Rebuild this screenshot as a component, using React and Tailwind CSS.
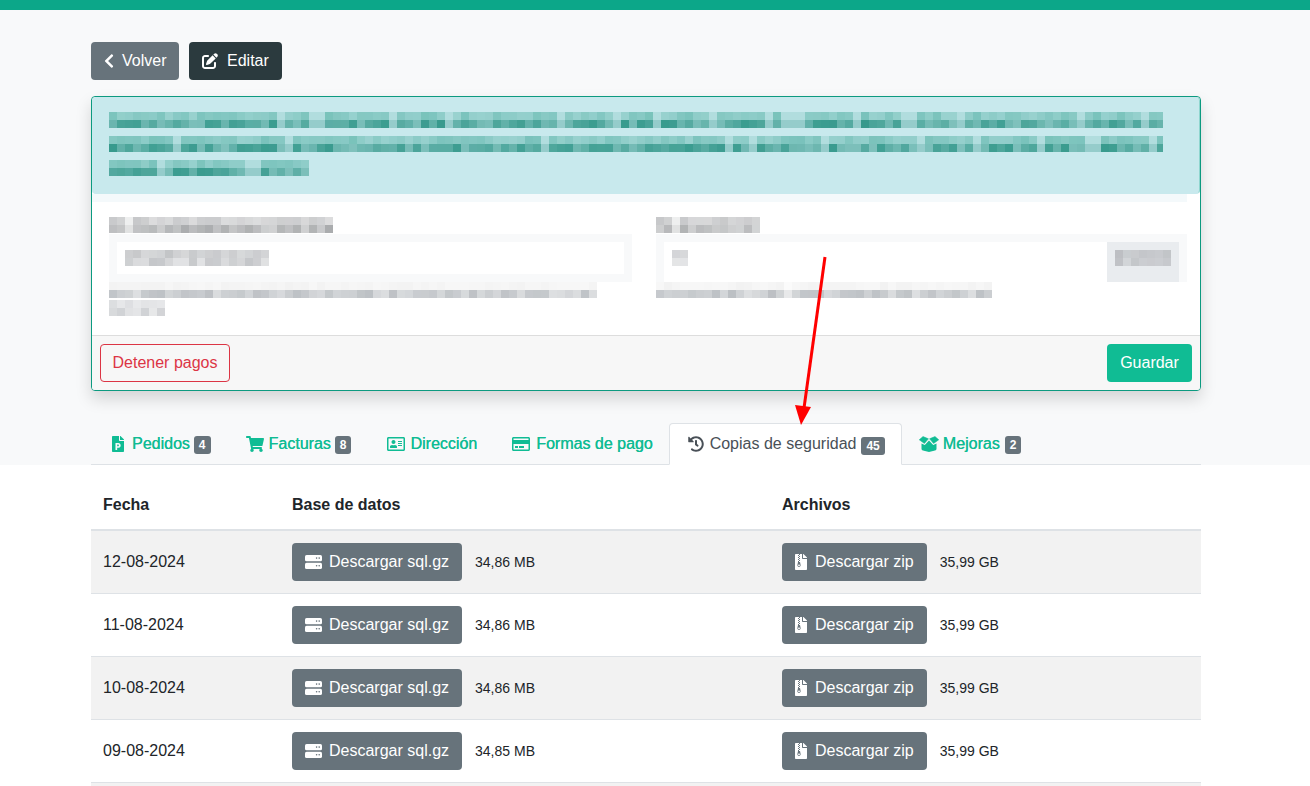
import React from 'react';
import {
  FaChevronLeft, FaFilePowerpoint, FaShoppingCart, FaRegAddressCard,
  FaRegCreditCard, FaHistory, FaFileArchive,
} from 'react-icons/fa';
import { FaPenToSquare } from 'react-icons/fa6';

// pixelated (censored) text from the original screenshot
const Mosaic = ({ width, seed, top, bottom, gaps = 0.1, height = 16 }) => {
  let s = seed;
  const rnd = () => {
    s = (s * 9301 + 49297) % 233280;
    return s / 233280;
  };
  const cells = [];
  const cols = Math.round(width / 8);
  for (let i = 0; i < cols; i++) {
    const gap = rnd() < gaps;
    const a = gap ? 0.25 : 0.5 + rnd() * 0.35;
    const b = gap ? 0.35 : 0.5 + rnd() * 0.5;
    cells.push(<rect key={`t${i}`} x={i * 8} y={0} width={8} height={8} fill={top} opacity={a} />);
    cells.push(<rect key={`b${i}`} x={i * 8} y={8} width={8} height={8} fill={bottom} opacity={b} />);
  }
  return (
    <svg width={width} height={height} className="block" shapeRendering="crispEdges">
      {cells}
    </svg>
  );
};

const ServerIcon = () => (
  <svg width="17" height="14" viewBox="0 0 17 14" className="shrink-0">
    <rect x="0" y="0" width="17" height="6.3" rx="1.6" fill="#ffffff" />
    <rect x="0" y="7.7" width="17" height="6.3" rx="1.6" fill="#ffffff" />
    <circle cx="11.6" cy="3.1" r="0.8" fill="#67737b" />
    <circle cx="14.2" cy="3.1" r="0.8" fill="#67737b" />
    <circle cx="11.6" cy="10.8" r="0.8" fill="#67737b" />
    <circle cx="14.2" cy="10.8" r="0.8" fill="#67737b" />
  </svg>
);

const BoxIcon = ({ className }) => (
  <svg viewBox="0 0 20 16" fill="currentColor" className={className}>
    <path d="M0.3 3.8 L4 0.6 L9.4 2.8 L5.4 7.4 Z" strokeLinejoin="round" stroke="currentColor" strokeWidth="0.6" />
    <path d="M19.7 3.8 L16 0.6 L10.6 2.8 L14.6 7.4 Z" strokeLinejoin="round" stroke="currentColor" strokeWidth="0.6" />
    <path d="M2.5 7.6 L5.8 8.9 L10 4.6 L14.2 8.9 L17.5 7.6 V12.8 Q17.5 14.2 16 14.6 L10 16 L4 14.6 Q2.5 14.2 2.5 12.8 Z" />
  </svg>
);

const Badge = ({ children, margin }) => (
  <span className={`${margin} mt-[3px] inline-block rounded-[3px] bg-[#67737b] px-[5px] py-[3px] text-[12px] font-bold leading-none text-white [text-shadow:none]`}>
    {children}
  </span>
);

const tabs = [
  { label: 'Pedidos', icon: FaFilePowerpoint, badge: 4, iconClass: 'ml-px h-4 w-[12px]', gap: 'gap-[8px]', margin: 'ml-[4px]' },
  { label: 'Facturas', icon: FaShoppingCart, badge: 8, iconClass: 'h-4 w-[18px]', gap: 'gap-[5px]', margin: 'ml-[4px]' },
  { label: 'Dirección', icon: FaRegAddressCard, iconClass: 'ml-px h-4 w-[18px]', gap: 'gap-[5px]' },
  { label: 'Formas de pago', icon: FaRegCreditCard, iconClass: 'h-4 w-[18px]', gap: 'gap-[6px]' },
  { label: 'Copias de seguridad', icon: FaHistory, badge: 45, active: true, iconClass: 'h-4 w-4', gap: 'gap-[6px]', margin: 'ml-[5px]' },
  { label: 'Mejoras', icon: BoxIcon, badge: 2, iconClass: 'h-4 w-[20px]', gap: 'gap-[4px]', margin: 'ml-[5px]' },
];

const backups = [
  { date: '12-08-2024', sql: '34,86 MB', zip: '35,99 GB' },
  { date: '11-08-2024', sql: '34,86 MB', zip: '35,99 GB' },
  { date: '10-08-2024', sql: '34,86 MB', zip: '35,99 GB' },
  { date: '09-08-2024', sql: '34,85 MB', zip: '35,99 GB' },
];

export default function App() {
  return (
    <div className="relative h-[786px] overflow-hidden bg-white font-['Liberation_Sans',Arial,sans-serif] text-[16px] text-[#212529]">
      <div className="h-[10px] bg-[#0ca789]" />

      <div className="bg-[#f8f9fa] pl-[91px] pr-[109px] pt-[32px]">
        <div className="flex gap-[10px]">
          <button className="flex h-[38px] w-[88px] items-center gap-[8px] rounded-[4px] bg-[#67737b] pl-[13px] text-white">
            <FaChevronLeft className="h-4 w-[10px]" />
            Volver
          </button>
          <button className="flex h-[38px] w-[93px] items-center gap-[9px] rounded-[4px] bg-[#2b3a3e] pl-[13px] text-white">
            <FaPenToSquare className="h-4 w-4" />
            Editar
          </button>
        </div>

        <div className="mt-[16px] overflow-hidden rounded-[4px] border border-[#0c9a80] bg-white shadow-[0_8px_16px_rgba(0,0,0,0.15)]">
          <div className="flex h-[97px] flex-col gap-[8px] rounded-[4px] border-b border-r border-b-[#c8e9ed] border-r-[#8fd6cf] bg-[#c8e9ed] pl-[17px] pt-[15px]">
            <Mosaic width={1054} seed={11} top="#6bbbb2" bottom="#36998c" />
            <Mosaic width={1054} seed={37} top="#6bbbb2" bottom="#36998c" />
            <Mosaic width={200} seed={73} top="#6bbbb2" bottom="#36998c" />
          </div>
          <div className="mr-[13px] h-[8px] bg-[#f4f9fb]" />

          <div className="grid h-[133px] grid-cols-[547px_1fr] pl-[17px] pt-[15px]">
            <div>
              <Mosaic width={224} seed={5} top="#bdbec0" bottom="#a9abad" />
              <div className="mt-px w-[523px] border-[8px] border-[#f8f9fa] bg-white py-[8px] pl-[8px]">
                <Mosaic width={146} seed={19} top="#b8babd" bottom="#c4c6c9" gaps={0.05} />
              </div>
              <Mosaic width={491} seed={23} top="#f0f0f0" bottom="#bcc0c4" gaps={0.04} />
              <div className="mt-[2px]">
                <Mosaic width={56} seed={29} top="#d5d7da" bottom="#cfd1d4" gaps={0} />
              </div>
            </div>
            <div>
              <Mosaic width={105} seed={41} top="#bdbec0" bottom="#a9abad" />
              <div className="mt-px flex h-[48px] w-[531px] bg-[#f8f9fa] p-[8px] pb-0">
                <div className="w-[443px] bg-white py-[8px] pl-[8px]">
                  <Mosaic width={16} seed={43} top="#c4c6c9" bottom="#e0e1e3" gaps={0} />
                </div>
                <div className="h-[40px] w-[72px] bg-[#e9ecef] py-[8px] pl-[8px]">
                  <Mosaic width={56} seed={47} top="#b5b7bb" bottom="#bec0c4" gaps={0} />
                </div>
              </div>
              <Mosaic width={338} seed={53} top="#f0f0f0" bottom="#bcc0c4" gaps={0.04} />
            </div>
          </div>

          <div className="flex items-center justify-between border-t border-[#dddddd] bg-[#f7f7f7] p-[8px]">
            <button className="h-[38px] w-[130px] rounded-[4px] border border-[#dc3545] text-[#dc3545]">Detener pagos</button>
            <button className="h-[38px] w-[85px] rounded-[4px] bg-[#10bc94] text-white">Guardar</button>
          </div>
        </div>

        <div className="mt-[32px] flex border-b border-[#dee2e6] pl-[3px]">
          {tabs.map((tab, index) => {
            const Icon = tab.icon;
            return (
              <div
                key={tab.label}
                className={`${index > 0 && index < 4 ? 'ml-px' : ''} ${tab.gap} ${
                  tab.active
                    ? '-mb-px -ml-px flex h-[42px] items-center rounded-t-[4px] border border-[#dee2e6] border-b-white bg-white pl-[18px] pr-4 text-[#495057]'
                    : 'flex h-[41px] items-center border border-transparent px-4 text-[#10bc94] [text-shadow:0.3px_0_0_#10bc94]'
                }`}
              >
                <Icon className={tab.iconClass} />
                <span className="flex items-center">
                  {tab.label}
                  {tab.badge && <Badge margin={tab.margin}>{tab.badge}</Badge>}
                </span>
              </div>
            );
          })}
        </div>
      </div>

      <div className="pl-[91px] pr-[109px] pt-[16px]">
        <table className="w-full table-fixed border-collapse">
          <thead>
            <tr className="border-b-2 border-[#dee2e6] text-left">
              <th className="w-[189px] p-[12px] font-bold">Fecha</th>
              <th className="w-[490px] p-[12px] font-bold">Base de datos</th>
              <th className="p-[12px] font-bold">Archivos</th>
            </tr>
          </thead>
          <tbody>
            {backups.map((row, index) => (
              <tr key={row.date} className={`border-b border-[#dee2e6] ${index % 2 === 0 ? 'bg-[#f2f2f2]' : ''}`}>
                <td className="p-[12px]">{row.date}</td>
                <td className="p-[12px]">
                  <div className="flex items-center gap-[13px]">
                    <button className="flex h-[38px] items-center gap-[7px] rounded-[4px] bg-[#67737b] px-[13px] text-white">
                      <ServerIcon />
                      Descargar sql.gz
                    </button>
                    <span className="text-[14px]">{row.sql}</span>
                  </div>
                </td>
                <td className="p-[12px]">
                  <div className="flex items-center gap-[13px]">
                    <button className="flex h-[38px] items-center gap-[8px] rounded-[4px] bg-[#67737b] px-[13px] text-white">
                      <FaFileArchive className="h-4 w-[12px]" />
                      Descargar zip
                    </button>
                    <span className="text-[14px]">{row.zip}</span>
                  </div>
                </td>
              </tr>
            ))}
          </tbody>
        </table>
        <div className="h-[3px] bg-[#f2f2f2]" />
      </div>

      {/* flecha de anotación */}
      <svg className="absolute left-0 top-0" width="1310" height="786">
        <line x1="825" y1="257" x2="804" y2="408" stroke="#ff0000" strokeWidth="3" />
        <polygon points="795,405 811,407 801,425" fill="#ff0000" />
      </svg>
    </div>
  );
}
